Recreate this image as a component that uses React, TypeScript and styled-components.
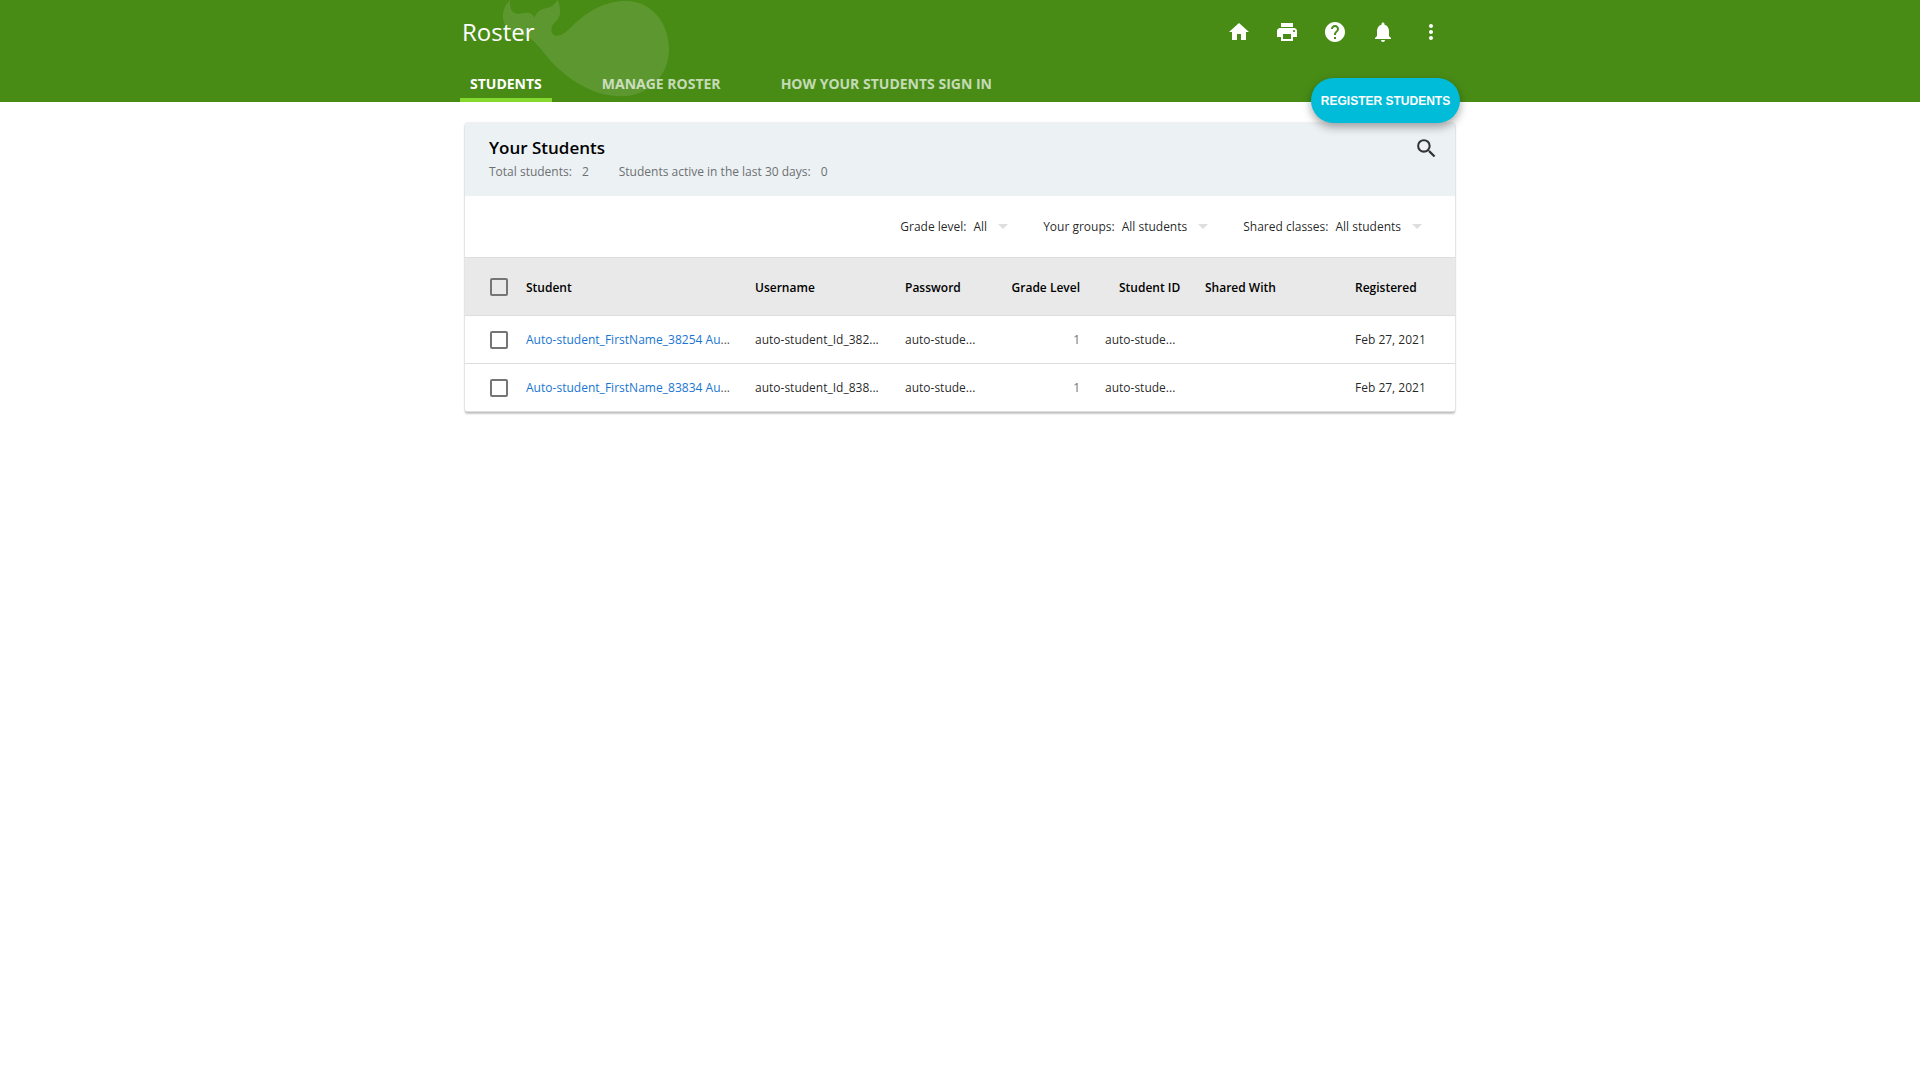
import React from 'react';
import styled, { createGlobalStyle, css } from 'styled-components';
import { MdHome, MdPrint, MdHelp, MdNotifications, MdMoreVert, MdSearch } from 'react-icons/md';

const GlobalStyle = createGlobalStyle`
  * { box-sizing: border-box; }
  body {
    margin: 0;
    background: #fff;
    color: rgba(0, 0, 0, 0.87);
    font-family: 'Open Sans', sans-serif;
    font-size: 12px;
  }
`;

const Page = styled.div`
  min-height: 100vh;
  background: #fff;
`;

const Header = styled.header`
  height: 102px;
  background: #488c16;
  color: #fff;
  display: flex;
  justify-content: center;
`;

const HeaderInner = styled.div`
  position: relative;
  width: 1000px;
  display: flex;
  flex-direction: column;
  justify-content: space-between;
`;

const Whale = styled.svg`
  position: absolute;
  left: -10px;
  top: 0;
  width: 300px;
  height: 102px;
  fill: rgba(255, 255, 255, 0.11);
`;

const TitleBar = styled.div`
  position: relative;
  display: flex;
  align-items: center;
  justify-content: space-between;
  height: 64px;
  padding: 0 17px 0 2px;
`;

const Title = styled.h1`
  margin: 0;
  font-size: 24px;
  font-weight: 400;
  line-height: 32px;
`;

const Actions = styled.nav`
  display: flex;
  gap: 24px;
`;

const IconButton = styled.button`
  display: flex;
  padding: 0;
  border: 0;
  background: none;
  color: inherit;
  font-size: 24px;
`;

const Tabs = styled.nav`
  position: relative;
  display: flex;
  gap: 40px;
`;

const Tab = styled.a<{ $active?: boolean }>`
  height: 38px;
  padding: 10px 10px 0;
  font-size: 14px;
  font-weight: 700;
  line-height: 20px;
  white-space: nowrap;
  color: ${(p) => (p.$active ? '#fff' : 'rgba(255, 255, 255, 0.7)')};
  border-bottom: 4px solid ${(p) => (p.$active ? '#85d82e' : 'transparent')};
`;

const RegisterButton = styled.button`
  position: absolute;
  right: 0;
  top: 78px;
  z-index: 1;
  width: 149px;
  height: 45px;
  padding: 0;
  border: 0;
  border-radius: 23px;
  background: #00bcd8;
  color: #fff;
  font: 700 12px 'Liberation Sans', sans-serif;
  white-space: nowrap;
  box-shadow: 0 4px 10px rgba(0, 0, 0, 0.35);
`;

const Card = styled.main`
  width: 990px;
  margin: 21px auto 0;
  background: #fff;
  border-bottom: 1px solid #dedede;
  border-radius: 2px;
  box-shadow: 0 2px 2px rgba(0, 0, 0, 0.2), 0 0 2px rgba(0, 0, 0, 0.22);
`;

const CardHeader = styled.div`
  display: flex;
  justify-content: space-between;
  align-items: flex-start;
  height: 73px;
  padding: 13px 16px 0 24px;
  background: #ecf1f4;
`;

const CardTitle = styled.h2`
  margin: 0;
  font-size: 17px;
  font-weight: 600;
  line-height: 24px;
  color: #000;
`;

const Stats = styled.div`
  display: flex;
  gap: 30px;
  line-height: 24px;
  color: #6d7072;
`;

const Stat = styled.span`
  display: flex;
  gap: 10px;
`;

const SearchButton = styled(IconButton)`
  color: #333;

  svg {
    width: 25px;
    height: 25px;
  }
`;

const Filters = styled.div`
  display: flex;
  justify-content: flex-end;
  align-items: center;
  gap: 35px;
  height: 61px;
  padding-right: 33px;
`;

const Filter = styled.div`
  display: flex;
  align-items: center;
  white-space: nowrap;
`;

const FilterValue = styled.span`
  margin: 0 11px 0 7px;
`;

const Caret = styled.i`
  border: 5px solid transparent;
  border-top-color: #dedede;
  border-bottom: 0;
`;

const columns = css`
  display: grid;
  grid-template-columns: 61px 229px 150px 100px 75px 125px 150px 76px;
  align-items: center;
  border-top: 1px solid #dedede;
`;

const HeadRow = styled.div`
  ${columns}
  height: 58px;
  background: #e9e9e9;
  color: #000;
  font-weight: 600;
`;

const Row = styled.div`
  ${columns}
  height: 48px;
`;

const Cell = styled.span<{ $align?: 'right'; $muted?: boolean; $shift?: number }>`
  white-space: nowrap;
  text-align: ${(p) => p.$align ?? 'left'};
  padding-left: ${(p) => p.$shift ?? 0}px;
  ${(p) => p.$muted && 'color: #757575;'}

  ${HeadRow} & {
    padding-top: 2px;
  }
`;

const StudentLink = styled.a`
  color: #1976d2;
  letter-spacing: 0.02px;
`;

const Ellipsis = styled.span`
  color: #555;
`;

const Checkbox = styled.span`
  width: 18px;
  height: 18px;
  margin-left: 25px;
  border: 2px solid #757575;
  border-radius: 2px;
`;

const filters = [
  ['Grade level:', 'All'],
  ['Your groups:', 'All students'],
  ['Shared classes:', 'All students'],
];

const students = [
  { name: 'Auto-student_FirstName_38254 Au', username: 'auto-student_Id_382...' },
  { name: 'Auto-student_FirstName_83834 Au', username: 'auto-student_Id_838...' },
];

export default function App() {
  return (
    <Page>
      <GlobalStyle />
      <Header>
        <HeaderInner>
          <Whale viewBox="0 0 900 306">
            <path d="M180 0C166 14 157 32 159 55C160 66 165 76 173 86C194 112 225 103 246 119C274 143 292 175 321 202C378 255 444 290 517 289C594 287 657 229 657 147C657 67 602 3 530 3C463 3 412 35 370 75C350 95 335 108 320 107C311 107 304 99 304 89C304 67 331 64 330 34C330 20 328 8 322 0C310 20 300 23 281 26C266 30 255 43 253 56C251 43 240 36 226 39C197 46 177 40 180 0Z" />
          </Whale>
          <TitleBar>
            <Title>Roster</Title>
            <Actions>
              <IconButton aria-label="Home"><MdHome /></IconButton>
              <IconButton aria-label="Print"><MdPrint /></IconButton>
              <IconButton aria-label="Help"><MdHelp /></IconButton>
              <IconButton aria-label="Notifications"><MdNotifications /></IconButton>
              <IconButton aria-label="More"><MdMoreVert /></IconButton>
            </Actions>
          </TitleBar>
          <Tabs>
            <Tab $active>STUDENTS</Tab>
            <Tab>MANAGE ROSTER</Tab>
            <Tab>HOW YOUR STUDENTS SIGN IN</Tab>
          </Tabs>
          <RegisterButton>REGISTER STUDENTS</RegisterButton>
        </HeaderInner>
      </Header>
      <Card>
        <CardHeader>
          <div>
            <CardTitle>Your Students</CardTitle>
            <Stats>
              <Stat><span>Total students:</span><span>2</span></Stat>
              <Stat><span>Students active in the last 30 days:</span><span>0</span></Stat>
            </Stats>
          </div>
          <SearchButton aria-label="Search"><MdSearch /></SearchButton>
        </CardHeader>
        <Filters>
          {filters.map(([label, value]) => (
            <Filter key={label}>
              <span>{label}</span>
              <FilterValue>{value}</FilterValue>
              <Caret />
            </Filter>
          ))}
        </Filters>
        <HeadRow>
          <Checkbox />
          <Cell>Student</Cell>
          <Cell>Username</Cell>
          <Cell>Password</Cell>
          <Cell $align="right">Grade Level</Cell>
          <Cell $shift={39}>Student ID</Cell>
          <Cell>Shared With</Cell>
          <Cell>Registered</Cell>
        </HeadRow>
        {students.map((s) => (
          <Row key={s.name}>
            <Checkbox />
            <Cell><StudentLink>{s.name}</StudentLink><Ellipsis>...</Ellipsis></Cell>
            <Cell>{s.username}</Cell>
            <Cell>auto-stude...</Cell>
            <Cell $align="right" $muted>1</Cell>
            <Cell $shift={25}>auto-stude...</Cell>
            <Cell />
            <Cell>Feb 27, 2021</Cell>
          </Row>
        ))}
      </Card>
    </Page>
  );
}
